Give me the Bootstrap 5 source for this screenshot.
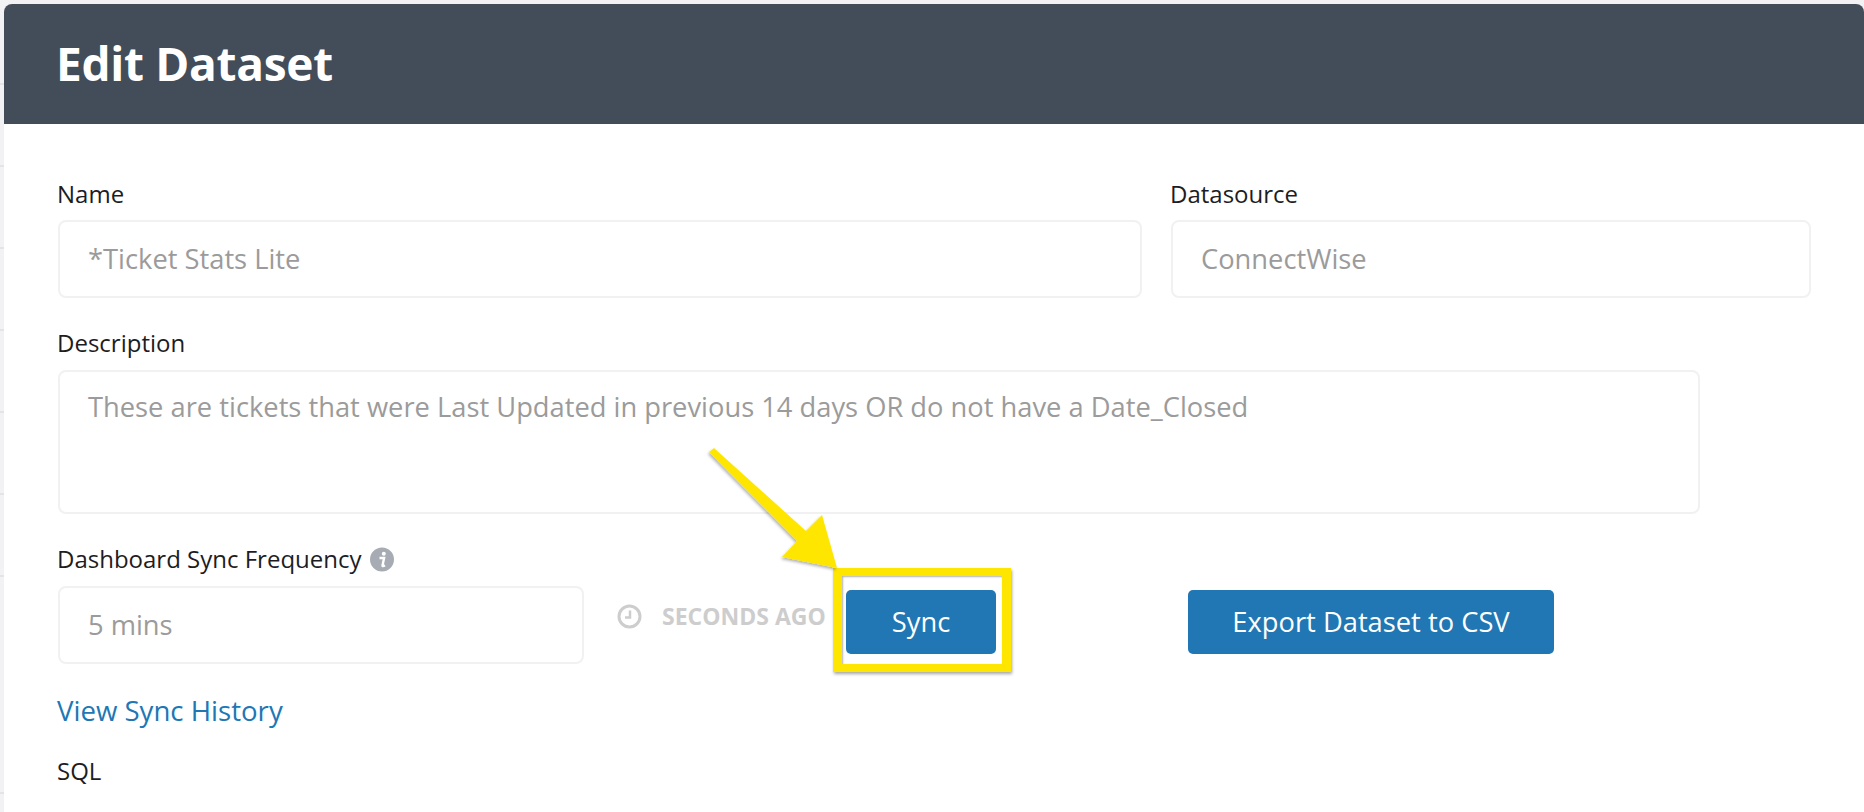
<!doctype html>
<html lang="en">
<head>
<meta charset="utf-8">
<title>Edit Dataset</title>
<link href="https://cdn.jsdelivr.net/npm/bootstrap@5.3.0/dist/css/bootstrap.min.css" rel="stylesheet">
<style>
html,body{height:812px;overflow:hidden}
body{background:#f2f2f4;font-family:"Open Sans","Liberation Sans",sans-serif;color:#1d1d1f;position:relative}
.edge{width:4px;flex:none;margin-top:4px}
.edge-tick{height:82px;border-bottom:2px solid #e4e4e6}
.edge-tick:first-child{height:81px}
.edge-tick.tall{height:217px}
.sheet{margin-top:4px;flex:1 1 auto;height:808px;background:#fff;border-radius:8px 8px 0 0;overflow:hidden}
.sheet-head{height:120px;background:#434c59;color:#fff;padding-left:52px}
.sheet-head h1{font-size:46px;font-weight:700;margin:0;letter-spacing:-.3px}
.sheet-body{padding:54px 0 0 54px}
.fld-label{font-size:24px;line-height:32px;margin:0 0 10px -1px;display:block}
.fld{border:2px solid #f1f1f2;border-radius:8px;background:#fff;font-size:27.3px;color:#9b9b9b;padding:0 28px;display:flex;align-items:center}
.fld-name{width:1084px;height:78px}
.fld-source{width:640px;height:78px}
.fld-desc{width:1642px;height:144px;align-items:flex-start;padding-top:15px}
.fld-freq{width:526px;height:78px}
.gap-cols{gap:29px}
.stack-row{margin-top:29px}
.stack-row.next{margin-top:29px}
.stack-row>.fld-label{margin-bottom:11px}
.stamp{width:262px;padding-left:33px;color:#cdcdcd;font-weight:700;font-size:23px;height:60px;gap:20px;white-space:nowrap}
.act{background:#2077b4;border:0;color:#fff;font-size:27.3px;height:64px;border-radius:5px;padding:0;margin-top:4px}
.act:hover,.act:active{background:#2077b4;color:#fff}
.act-sync{width:150px}
.act-export{width:366px;margin-left:192px}
.hist{display:block;color:#2077b4;font-size:27.6px;line-height:40px;margin:26px 0 0 -1px;text-decoration:none}
.sql-label{margin-top:25px}
.spot{position:absolute;left:833px;top:568px;width:178px;height:104px;border:8px solid #ffe600;border-left-width:9px;border-right-width:9px;box-shadow:1px 2px 3px rgba(0,0,0,.35),inset 1px 1px 2px rgba(0,0,0,.3)}
.pointer{position:absolute;left:0;top:0;width:1864px;height:812px;pointer-events:none}
</style>
</head>
<body class="d-flex">
<div class="edge">
  <div class="edge-tick"></div><div class="edge-tick"></div><div class="edge-tick"></div><div class="edge-tick"></div><div class="edge-tick"></div><div class="edge-tick"></div><div class="edge-tick"></div><div class="edge-tick tall"></div>
</div>
<div class="sheet">
  <div class="sheet-head d-flex align-items-center"><h1>Edit Dataset</h1></div>
  <div class="sheet-body">
    <div class="d-flex gap-cols">
      <div><label class="fld-label">Name</label><div class="fld fld-name">*Ticket Stats Lite</div></div>
      <div><label class="fld-label">Datasource</label><div class="fld fld-source">ConnectWise</div></div>
    </div>
    <div class="stack-row">
      <label class="fld-label">Description</label>
      <div class="fld fld-desc">These are tickets that were Last Updated in previous 14 days OR do not have a Date_Closed</div>
    </div>
    <div class="stack-row next">
      <label class="fld-label d-flex align-items-center gap-2">Dashboard Sync Frequency
        <svg width="24" height="25" viewBox="0 0 24 25"><circle cx="12" cy="12.5" r="12" fill="#a7abb3"/><circle cx="13.8" cy="6.8" r="2" fill="#fff"/><path d="M9.5 11h4.6l-1.6 7.4c-.1.9.8 1 2.4-.2" fill="none" stroke="#fff" stroke-width="2.4"/></svg>
      </label>
      <div class="d-flex align-items-start">
        <div class="fld fld-freq">5 mins</div>
        <div class="stamp d-flex align-items-center">
          <svg width="25" height="25" viewBox="0 0 25 25"><circle cx="12.5" cy="12.5" r="10.5" fill="none" stroke="#cdcdcd" stroke-width="3"/><path d="M13 6.5v7H8" fill="none" stroke="#cdcdcd" stroke-width="2.5"/></svg>
          <span>SECONDS AGO</span>
        </div>
        <button class="btn act act-sync" type="button">Sync</button>
        <button class="btn act act-export" type="button">Export Dataset to CSV</button>
      </div>
    </div>
    <a class="hist" href="#">View Sync History</a>
    <label class="fld-label sql-label">SQL</label>
  </div>
</div>
<div class="spot"></div>
<svg class="pointer" viewBox="0 0 1864 812"><defs><filter id="sh" x="-10%" y="-10%" width="125%" height="125%"><feDropShadow dx="-1" dy="2" stdDeviation="1.5" flood-color="#000" flood-opacity=".3"/></filter></defs><polygon points="709,452 714,448 806,531 822,515 837,568 782,557 797,541" fill="#ffe600" filter="url(#sh)"/></svg>
<script src="https://cdn.jsdelivr.net/npm/bootstrap@5.3.0/dist/js/bootstrap.bundle.min.js"></script>
</body>
</html>
